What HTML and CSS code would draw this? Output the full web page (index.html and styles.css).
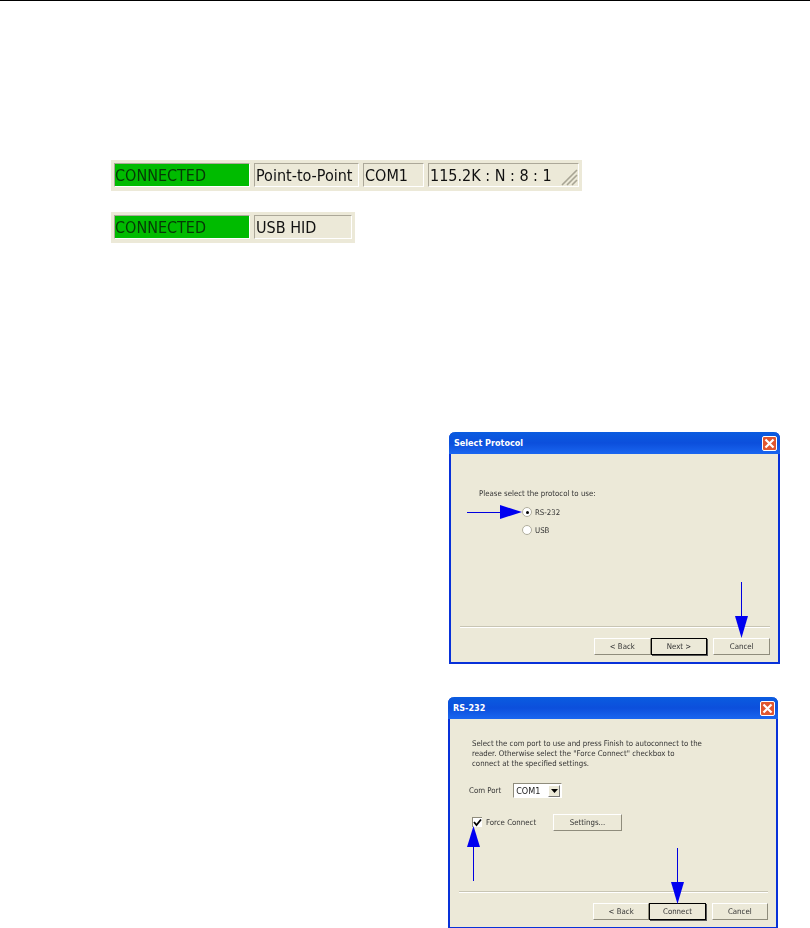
FILE: index.html
```html
<!DOCTYPE html>
<html lang="en">
<head>
  <meta charset="UTF-8">
  <title>Connection status and wizard</title>
  <link rel="stylesheet" href="styles.css">
</head>
<body>
  <div class="page">
    <div class="page-rule"></div>

    <!-- Status bars -->
    <div class="status-list">
      <div class="status-bar">
        <span class="panel panel-ok panel-state">CONNECTED</span>
        <span class="panel panel-mode">Point-to-Point</span>
        <span class="panel panel-port">COM1</span>
        <span class="panel panel-baud">115.2K : N : 8 : 1
          <svg class="grip" width="18" height="18" viewBox="0 0 18 18">
            <path d="M17 2 L2 17 M17 7 L7 17 M17 12 L12 17" stroke="#a8a594" stroke-width="1.6" fill="none"/>
          </svg>
        </span>
      </div>
      <div class="status-bar">
        <span class="panel panel-ok panel-state">CONNECTED</span>
        <span class="panel panel-usb">USB HID</span>
      </div>
    </div>

    <!-- Dialogs -->
    <div class="dialog-list">
      <div class="dialog dialog-protocol">
        <div class="title-bar">
          <span class="title-text">Select Protocol</span>
          <span class="close-btn">
            <svg width="11" height="11" viewBox="0 0 11 11"><path d="M1.5 1.5 L9.5 9.5 M9.5 1.5 L1.5 9.5" stroke="#fff" stroke-width="2.2"/></svg>
          </span>
        </div>
        <div class="dialog-body">
          <p class="protocol-label">Please select the protocol to use:</p>
          <div class="radio-row"><span class="radio radio-on"></span>RS-232</div>
          <div class="radio-row"><span class="radio"></span>USB</div>
        </div>
        <div class="dialog-footer">
          <button class="btn">&lt; Back</button>
          <button class="btn btn-default">Next &gt;</button>
          <button class="btn btn-last">Cancel</button>
        </div>
        <svg class="arrow arrow-radio" width="55" height="14" viewBox="0 0 55 14"><path d="M0 7.5 H34" stroke="#0000e0" stroke-width="1"/><path d="M33 0 L55 7 L33 14 Z" fill="#0000f0"/></svg>
        <svg class="arrow arrow-cancel" width="13" height="56" viewBox="0 0 13 56"><path d="M6.5 0 V35" stroke="#0000e0" stroke-width="1"/><path d="M0 34 H13 L6.5 56 Z" fill="#0000f0"/></svg>
      </div>

      <div class="dialog dialog-port">
        <div class="title-bar">
          <span class="title-text">RS-232</span>
          <span class="close-btn">
            <svg width="11" height="11" viewBox="0 0 11 11"><path d="M1.5 1.5 L9.5 9.5 M9.5 1.5 L1.5 9.5" stroke="#fff" stroke-width="2.2"/></svg>
          </span>
        </div>
        <div class="dialog-body">
          <p class="port-help">Select the com port to use and press Finish to autoconnect to the<br>reader. Otherwise select the "Force Connect" checkbox to<br>connect at the specified settings.</p>
          <div class="port-row">
            <span>Com Port</span>
            <span class="combo">COM1<span class="combo-btn"><svg width="7" height="4" viewBox="0 0 7 4"><path d="M0 0 H7 L3.5 4 Z" fill="#000"/></svg></span></span>
          </div>
          <div class="force-row">
            <span class="check"><svg width="9" height="9" viewBox="0 0 9 9"><path d="M1 4 L3.5 7 L8 1.5" stroke="#000" stroke-width="1.8" fill="none"/></svg></span>
            <span class="force-label">Force Connect</span>
            <button class="btn btn-settings">Settings...</button>
          </div>
        </div>
        <div class="dialog-footer">
          <button class="btn">&lt; Back</button>
          <button class="btn btn-default">Connect</button>
          <button class="btn btn-last">Cancel</button>
        </div>
        <svg class="arrow arrow-force" width="13" height="55" viewBox="0 0 13 55"><path d="M6.5 55 V20" stroke="#0000e0" stroke-width="1"/><path d="M0 21 H13 L6.5 0 Z" fill="#0000f0"/></svg>
        <svg class="arrow arrow-connect" width="13" height="56" viewBox="0 0 13 56"><path d="M6.5 0 V35" stroke="#0000e0" stroke-width="1"/><path d="M0 34 H13 L6.5 56 Z" fill="#0000f0"/></svg>
      </div>
    </div>
  </div>
</body>
</html>
```

FILE: styles.css
```css
* {
  margin: 0;
  padding: 0;
  box-sizing: border-box;
}

body {
  background-color: #fff;
  color: #000;
  font-family: "DejaVu Sans Condensed", "DejaVu Sans", sans-serif;
}

.page {
  width: 810px;
  height: 928px;
  overflow: hidden;
}

.page-rule {
  height: 1px;
  background-color: #000;
}

/* Status bars */
.status-list {
  display: flex;
  flex-direction: column;
  align-items: flex-start;
  gap: 21px;
  padding: 159px 0 0 111px;
}

.status-bar {
  display: flex;
  gap: 4px;
  height: 31px;
  padding: 3px 3px 4px 3px;
  background-color: #ece9d8;
  font-size: 16px;
  filter: blur(0.3px);
}

.panel {
  display: flex;
  align-items: center;
  padding-left: 1px;
  border: 1px solid;
  border-color: #aca899 #fff #fff #aca899;
  color: #111;
  white-space: nowrap;
  position: relative;
}

.panel-ok {
  background-color: #00bb00;
  color: #063806;
  padding-left: 0;
}

.panel-state { width: 136px; }
.panel-mode { width: 105px; }
.panel-port { width: 61px; }
.panel-baud { width: 151px; }
.panel-usb { width: 98px; }

.grip {
  position: absolute;
  right: 0;
  bottom: 0;
}

/* Dialogs */
.dialog-list {
  display: flex;
  flex-direction: column;
  align-items: flex-start;
  gap: 33px;
  padding: 189px 0 0 448px;
}

.dialog {
  position: relative;
  display: flex;
  flex-direction: column;
  width: 331px;
  height: 232px;
  background-color: #ece9d8;
  border: 2px solid #0831d9;
  border-top: none;
  border-radius: 6px 6px 0 0;
  font-size: 7.8px;
  color: #333;
}

.dialog-protocol { margin-left: 1px; }
.dialog-port { width: 330px; }

.title-bar {
  display: flex;
  align-items: center;
  justify-content: space-between;
  flex-shrink: 0;
  height: 22px;
  margin: 0 -2px;
  padding: 0 3px 0 5px;
  background: linear-gradient(#0a5ce0, #0c4fdc 50%, #1a66f0);
  border-radius: 6px 6px 0 0;
  color: #fff;
  font-size: 9px;
  font-weight: bold;
}

.close-btn {
  display: flex;
  align-items: center;
  justify-content: center;
  width: 15px;
  height: 15px;
  background-color: #e0562f;
  border: 1px solid #fff;
  border-radius: 2px;
}

.dialog-body {
  flex: 1;
  filter: blur(0.25px);
}

.dialog-protocol .dialog-body { padding: 35px 0 0 28px; }

.protocol-label { margin-bottom: 5px; }

.radio-row {
  display: flex;
  align-items: center;
  gap: 3px;
  height: 18px;
  margin-left: 43px;
}

.radio {
  width: 10px;
  height: 10px;
  background-color: #fff;
  border: 1px solid #b0ad9c;
  border-radius: 50%;
  position: relative;
}

.radio-on::after {
  content: "";
  position: absolute;
  left: 3px;
  top: 3px;
  width: 3px;
  height: 3px;
  background-color: #000;
  border-radius: 50%;
}

.dialog-footer {
  display: flex;
  flex-shrink: 0;
  height: 35px;
  margin: 0 8px 0 9px;
  padding: 10px 0 0 134px;
  border-top: 1px solid #fff;
  box-shadow: 0 -1px 0 #c8c5b4;
  filter: blur(0.25px);
}

.btn {
  width: 57px;
  height: 17px;
  background-color: #ece9d8;
  border: 1px solid;
  border-color: #fff #8f8c7c #8f8c7c #fff;
  font-family: "DejaVu Sans Condensed", "DejaVu Sans", sans-serif;
  font-size: 7.8px;
  color: #333;
}

.btn-default {
  border: 1px solid #000;
  box-shadow: 1px 1px 0 #555;
}

.btn-last { margin-left: 6px; }

.dialog-port .dialog-body { padding: 20px 0 0 22px; }

.port-help {
  line-height: 10px;
  margin-bottom: 14px;
}

.port-row {
  display: flex;
  align-items: center;
  gap: 12px;
  margin-left: -3px;
  height: 15px;
}

.combo {
  display: flex;
  align-items: center;
  justify-content: space-between;
  width: 49px;
  height: 15px;
  padding-left: 2px;
  background-color: #fff;
  border: 1px solid;
  border-color: #8f8c7c #fff #fff #8f8c7c;
  color: #222;
  font-size: 9px;
}

.combo-btn {
  display: flex;
  align-items: center;
  justify-content: center;
  width: 12px;
  height: 12px;
  margin-right: 1px;
  background-color: #ece9d8;
  border: 1px solid;
  border-color: #fff #777 #777 #fff;
}

.force-row {
  display: flex;
  align-items: center;
  margin-top: 15px;
  height: 18px;
}

.check {
  display: flex;
  align-items: center;
  justify-content: center;
  width: 10px;
  height: 10px;
  background-color: #fff;
  border-top: 1px solid #8f8c7c;
  border-left: 1px solid #8f8c7c;
}

.force-label {
  margin-left: 4px;
  width: 67px;
}

.btn-settings {
  width: 69px;
}

/* Arrows */
.arrow {
  position: absolute;
  z-index: 2;
}

.arrow-radio { left: 16px; top: 73px; }
.arrow-cancel { left: 284px; top: 150px; }
.arrow-force { left: 17px; top: 129px; }
.arrow-connect { left: 221px; top: 151px; }
```
